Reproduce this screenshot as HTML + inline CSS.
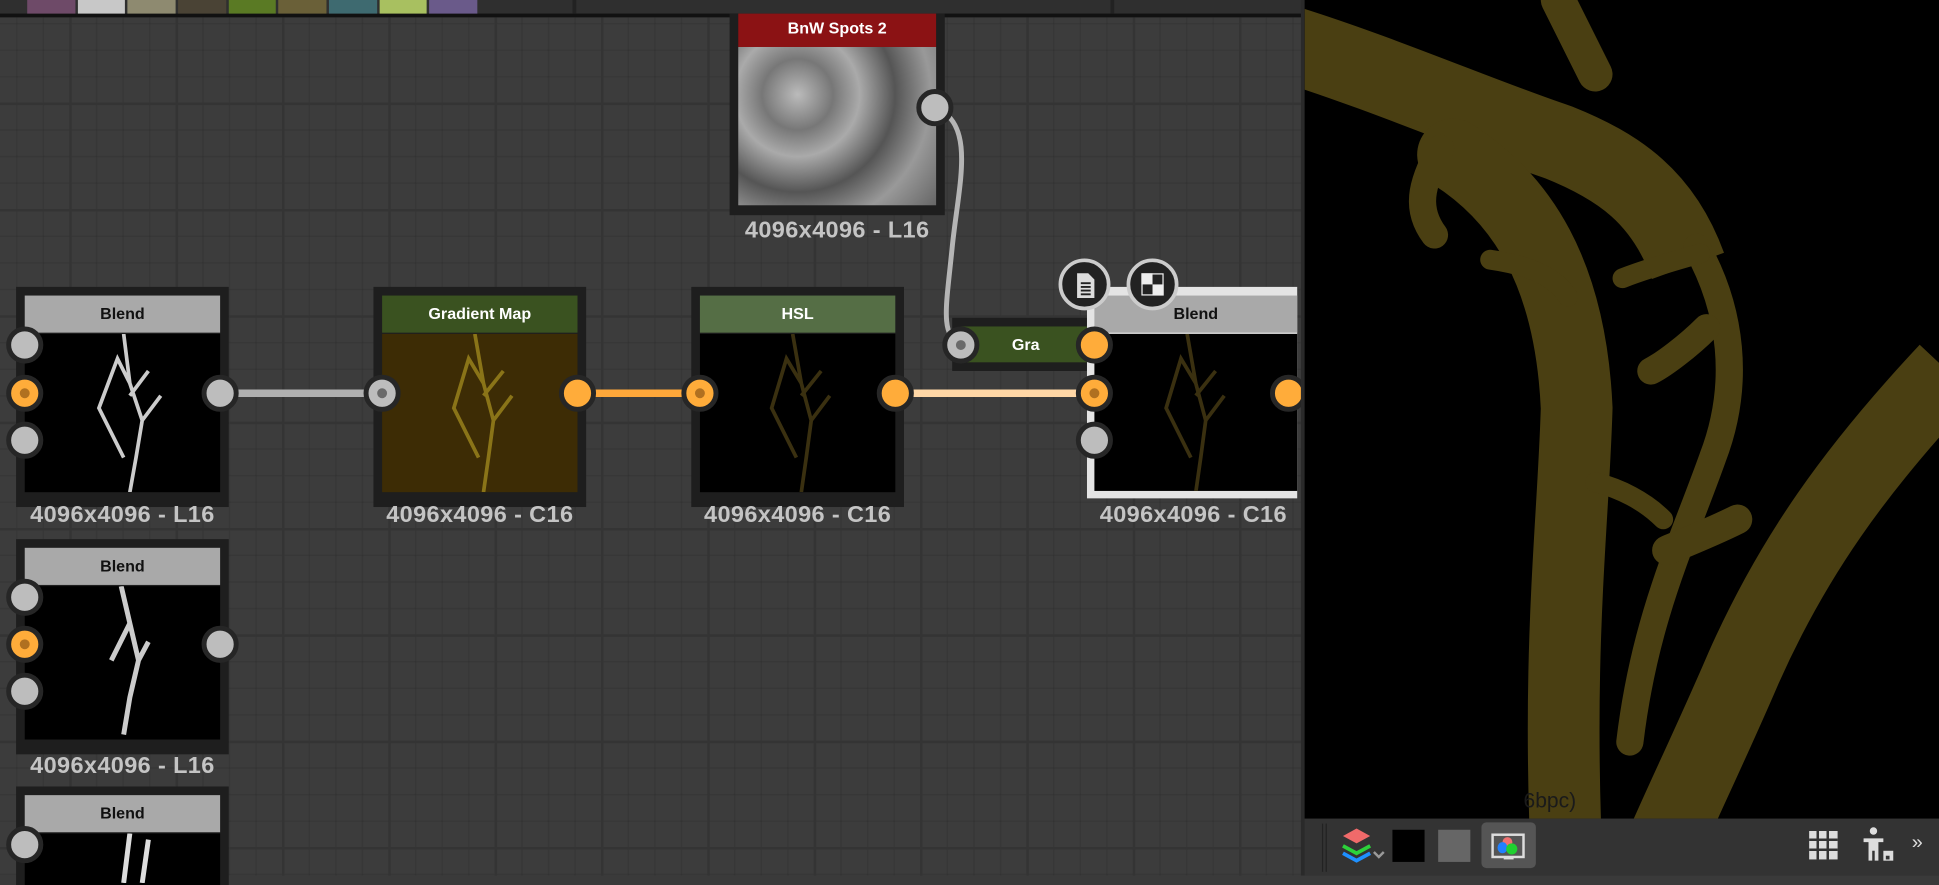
<!DOCTYPE html>
<html><head><meta charset="utf-8"><style>
html,body{margin:0;padding:0;width:1939px;height:876px;overflow:hidden;background:#3a3a3a}
#w{position:absolute;left:0;top:0;width:1568px;height:708px;transform:scale(1.23661);transform-origin:0 0;font-family:"Liberation Sans",sans-serif}
.a{position:absolute}
.node{position:absolute;background:#1e1e1e}
.hd{position:absolute;left:7px;right:7px;top:7px;height:30px;text-align:center;font-weight:bold;font-size:13px;line-height:30px}
.pv{position:absolute;left:7px;right:7px;top:38px;bottom:12px;background:#000;overflow:hidden}
.lbl{position:absolute;color:#c4c4c4;font-weight:bold;font-size:19px;text-align:center;width:200px;letter-spacing:0.3px}
.p{position:absolute;width:22px;height:22px;border-radius:50%;background:#bdbdbd;border:4px solid #262626;margin:-15px 0 0 -15px;box-sizing:content-box}
.o{background:#ffac3a}
.d::after{content:"";position:absolute;left:7px;top:7px;width:8px;height:8px;border-radius:50%;background:#6a6a6a}
.o.d::after{background:#b07020}
</style></head><body><div id="w">
<div class="a" style="left:0;top:11px;width:1052px;height:697px;background-color:#3c3c3c;background-image:linear-gradient(#343434 2px,transparent 2px),linear-gradient(90deg,#343434 2px,transparent 2px),linear-gradient(rgba(0,0,0,.08) 1px,transparent 1px),linear-gradient(90deg,rgba(0,0,0,.08) 1px,transparent 1px);background-size:86px 86px,86px 86px,21.5px 21.5px,21.5px 21.5px;background-position:-30px -14px"></div>
<div class="a" style="left:0;top:0;width:1568px;height:11px;background:#2f2f2f;border-bottom:3px solid #111"></div>
<div class="a" style="left:22px;top:0;height:11px;width:364px;display:flex;gap:2px">
<div style="flex:1;background:#6e4a68"></div><div style="flex:1;background:#c8c8c8"></div><div style="flex:1;background:#8e8a70"></div><div style="flex:1;background:#4a4335"></div><div style="flex:1;background:#5a7a24"></div><div style="flex:1;background:#6a6038"></div><div style="flex:1;background:#3e6a70"></div><div style="flex:1;background:#a8c060"></div><div style="flex:1;background:#6a5a8a"></div></div>
<div class="a" style="left:463px;top:0;width:3px;height:11px;background:#222"></div>
<div class="a" style="left:898px;top:0;width:3px;height:11px;background:#222"></div>
<svg class="a" style="left:0;top:0" width="1052" height="708">
<path d="M185 318H302" stroke="#b0b0b0" stroke-width="6"/>
<path d="M474 318H559" stroke="#ffa83a" stroke-width="6"/>
<path d="M731 318H880" stroke="#ffd7a6" stroke-width="6"/>
<path d="M756 87C790 100 775 150 770 200C765 250 760 270 777 279" stroke="#b5b5b5" stroke-width="4" fill="none"/>
</svg>
<div class="node" style="left:590px;top:11px;width:174px;height:163px">
<div class="hd" style="top:0;height:27px;line-height:24px;background:#8b1214;color:#fff">BnW Spots 2</div>
<div class="pv" style="top:27px;bottom:8px;background:radial-gradient(circle at 30% 30%,#bbb 0,#777 20%,#aaa 35%,#555 55%,#999 75%,#666 100%)"></div></div>
<div class="lbl" style="left:577px;top:176px">4096x4096 - L16</div>
<div class="p" style="left:756px;top:87px"></div>
<div class="node" style="left:13px;top:232px;width:172px;height:178px"><div class="hd" style="background:#a9a9a9;color:#111">Blend</div><div class="pv">
<svg width="158" height="128"><path d="M80 0L85 40L95 70L90 100L85 128M85 40L75 20L60 60L80 100M95 70L110 50M85 50L100 30" stroke="#ccc" stroke-width="3" fill="none"/></svg></div></div>
<div class="lbl" style="left:-1px;top:406px">4096x4096 - L16</div>
<div class="p" style="left:20px;top:279px"></div><div class="p o d" style="left:20px;top:318px"></div><div class="p" style="left:20px;top:356px"></div><div class="p" style="left:178px;top:318px"></div>
<div class="node" style="left:302px;top:232px;width:172px;height:178px"><div class="hd" style="background:#3a5220;color:#fff">Gradient Map</div><div class="pv" style="background:#3d2c05">
<svg width="158" height="128"><path d="M75 0L82 40L90 70L86 100L82 128M82 40L70 20L58 60L78 100M90 70L105 50M82 50L98 30" stroke="#8a7418" stroke-width="3" fill="none"/></svg></div></div>
<div class="lbl" style="left:288px;top:406px">4096x4096 - C16</div>
<div class="p d" style="left:309px;top:318px"></div><div class="p o" style="left:467px;top:318px"></div>
<div class="node" style="left:559px;top:232px;width:172px;height:178px"><div class="hd" style="background:#556e45;color:#fff">HSL</div><div class="pv">
<svg width="158" height="128"><path d="M75 0L82 40L90 70L86 100L82 128M82 40L70 20L58 60L78 100M90 70L105 50M82 50L98 30" stroke="#3a3010" stroke-width="3" fill="none"/></svg></div></div>
<div class="lbl" style="left:545px;top:406px">4096x4096 - C16</div>
<div class="p o d" style="left:566px;top:318px"></div><div class="p o" style="left:724px;top:318px"></div>
<div class="node" style="left:770px;top:257px;width:112px;height:43px"><div class="a" style="left:7px;top:7px;right:0;height:29px;background:#3a5220;color:#fff;font-weight:bold;font-size:13px;line-height:29px;text-align:center">Gra</div></div>
<div class="p d" style="left:777px;top:279px"></div>
<div class="node" style="left:879px;top:232px;width:170px;height:171px;background:#e4e4e4"><div class="hd" style="left:6px;right:0;background:#a9a9a9;color:#111">Blend</div><div class="pv" style="left:6px;right:0;bottom:6px">
<svg width="160" height="128"><path d="M75 0L82 40L90 70L86 100L82 128M82 40L70 20L58 60L78 100M90 70L105 50M82 50L98 30" stroke="#3a3010" stroke-width="3" fill="none"/></svg></div></div>
<div class="lbl" style="left:865px;top:406px">4096x4096 - C16</div>
<div class="p o" style="left:885px;top:279px"></div><div class="p o d" style="left:885px;top:318px"></div><div class="p" style="left:885px;top:356px"></div><div class="p o" style="left:1042px;top:318px"></div>
<div class="a" style="left:856px;top:209px;width:42px;height:42px;border-radius:50%;background:#222;border:3px solid #ccc;box-sizing:border-box"><svg class="a" style="left:11px;top:8px" width="16" height="22"><path d="M1 1H10L15 6V21H1Z" fill="#ddd"/><path d="M4 9H12M4 12H12M4 15H12M4 18H12" stroke="#222" stroke-width="1.5"/></svg></div>
<div class="a" style="left:911px;top:209px;width:42px;height:42px;border-radius:50%;background:#222;border:3px solid #ccc;box-sizing:border-box"><div class="a" style="left:9px;top:9px;width:9px;height:9px;background:#eee"></div><div class="a" style="left:18px;top:18px;width:9px;height:9px;background:#eee"></div><div class="a" style="left:9px;top:9px;width:18px;height:18px;border:1px solid #eee;box-sizing:border-box"></div></div>
<div class="node" style="left:13px;top:436px;width:172px;height:174px"><div class="hd" style="background:#a9a9a9;color:#111">Blend</div><div class="pv">
<svg width="158" height="128"><path d="M78 0L85 30L92 60L85 90L80 120M85 30L70 60M92 60L100 45" stroke="#ccc" stroke-width="4" fill="none"/></svg></div></div>
<div class="lbl" style="left:-1px;top:609px">4096x4096 - L16</div>
<div class="p" style="left:20px;top:483px"></div><div class="p o d" style="left:20px;top:521px"></div><div class="p" style="left:20px;top:559px"></div><div class="p" style="left:178px;top:521px"></div>
<div class="node" style="left:13px;top:636px;width:172px;height:80px"><div class="hd" style="background:#a9a9a9;color:#111">Blend</div><div class="pv" style="bottom:0"><svg width="158" height="40"><path d="M85 0L80 40M100 5L95 40" stroke="#ddd" stroke-width="4"/></svg></div></div>
<div class="p" style="left:20px;top:683px"></div>
<div class="a" style="left:1052px;top:0;width:516px;height:708px;background:#2a2a2a"></div>
<div class="a" style="left:1055px;top:0;width:513px;height:662px;background:#000;overflow:hidden">
<svg width="513" height="662" style="position:absolute;left:0;top:0"><g transform="translate(-1055 0)" fill="none" stroke="#4a3f12">
<path d="M1040 35C1120 60 1200 95 1260 115C1310 135 1345 160 1365 215" stroke-width="62"/>
<path d="M1175 125C1230 160 1270 220 1275 330C1272 430 1258 530 1268 720" stroke-width="58" stroke-linecap="round"/>
<path d="M1372 200C1400 250 1408 310 1385 370C1360 440 1330 500 1318 600" stroke-width="22" stroke-linecap="round"/>
<path d="M1575 300C1500 380 1450 450 1410 540C1380 610 1350 670 1330 720" stroke-width="62"/>
<path d="M1260 0L1290 60" stroke-width="28" stroke-linecap="round"/>
<path d="M1165 120C1148 150 1145 170 1160 190" stroke-width="22" stroke-linecap="round"/>
<path d="M1205 210C1240 215 1258 225 1268 240" stroke-width="16" stroke-linecap="round"/>
<path d="M1375 205C1350 212 1330 218 1312 225" stroke-width="16" stroke-linecap="round"/>
<path d="M1380 265C1365 280 1345 295 1335 300" stroke-width="22" stroke-linecap="round"/>
<path d="M1405 420C1385 430 1360 440 1348 445" stroke-width="24" stroke-linecap="round"/>
<path d="M1290 390C1310 395 1330 405 1345 420" stroke-width="16" stroke-linecap="round"/>
</g></svg>
<div class="a" style="left:177px;top:638px;color:#1a1a1a;font-size:17px">6bpc)</div></div>
<div class="a" style="left:1055px;top:662px;width:513px;height:46px;background:#333"></div>
<div class="a" style="left:1069px;top:666px;width:2px;height:39px;border-left:1px solid #222;border-right:1px solid #222"></div>
<svg class="a" style="left:1085px;top:670px" width="40" height="30"><path d="M1 6L12 0L23 6L12 12Z" fill="#f06a6a"/><path d="M1 14L12 20L23 14" stroke="#2cd23a" stroke-width="3" fill="none"/><path d="M1 20L12 26L23 20" stroke="#1e90ff" stroke-width="3" fill="none"/><path d="M26 19L30 23L34 19" stroke="#999" stroke-width="2" fill="none"/></svg>
<div class="a" style="left:1126px;top:671px;width:26px;height:26px;background:#000"></div>
<div class="a" style="left:1163px;top:671px;width:26px;height:26px;background:#666"></div>
<div class="a" style="left:1198px;top:665px;width:44px;height:37px;background:#555;border-radius:4px"><div class="a" style="left:8px;top:9px;width:23px;height:16px;border:2px solid #ddd"></div><div class="a" style="left:18px;top:28px;width:8px;height:2px;background:#ddd"></div><div class="a" style="left:17px;top:12px;width:8px;height:8px;border-radius:50%;background:#f07070"></div><div class="a" style="left:13px;top:16px;width:8px;height:9px;border-radius:50%;background:#2080ff"></div><div class="a" style="left:20px;top:17px;width:9px;height:9px;border-radius:50%;background:#20d030"></div></div>
<div class="a" style="left:1463px;top:672px;width:23px;height:23px;background:linear-gradient(90deg,transparent 6px,#333 6px,#333 8px,transparent 8px,transparent 14px,#333 14px,#333 16px,transparent 16px),linear-gradient(transparent 6px,#333 6px,#333 8px,transparent 8px,transparent 14px,#333 14px,#333 16px,transparent 16px),#ddd"></div>
<svg class="a" style="left:1506px;top:668px" width="30" height="30"><circle cx="9" cy="4" r="3" fill="#ddd"/><path d="M1 10H17V13H13V28H10V20H8V28H5V13H1Z" fill="#ddd"/><rect x="17" y="20" width="8" height="8" fill="#ddd"/><rect x="19" y="24" width="3" height="3" fill="#333"/></svg>
<div class="a" style="left:1546px;top:673px;color:#ddd;font-size:16px">»</div>
</div></body></html>
